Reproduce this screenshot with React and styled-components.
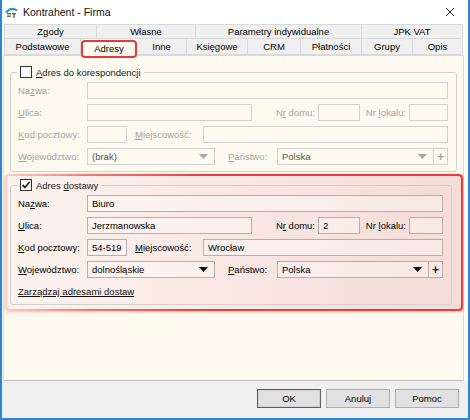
import React from "react";
import styled, { createGlobalStyle } from "styled-components";

const GlobalStyle = createGlobalStyle`
  html, body {
    margin: 0;
    padding: 0;
    background: #ffffff;
  }
  body {
    font-family: "Liberation Sans", Arial, sans-serif;
    font-size: 9.5px;
    color: #000;
  }
  * {
    box-sizing: border-box;
  }
`;

const topTabs = [
  { label: "Zgody", w: 93 },
  { label: "Własne", w: 99 },
  { label: "Parametry indywidualne", w: 166 },
  { label: "JPK VAT", w: 101 },
];

const bottomTabs = [
  { label: "Podstawowe", w: 77 },
  { label: "Adresy", w: 56, active: true },
  { label: "Inne", w: 50 },
  { label: "Księgowe", w: 61 },
  { label: "CRM", w: 53 },
  { label: "Płatności", w: 61 },
  { label: "Grupy", w: 51 },
  { label: "Opis", w: 50 },
];

function AppIcon() {
  return (
    <svg width="13" height="13" viewBox="0 0 13 13">
      <path d="M1 6.5 Q6 0.5 12 4.5" stroke="#2f8fc9" strokeWidth="2" fill="none" />
      <rect x="2" y="7" width="4" height="1.4" fill="#5c6670" />
      <rect x="2" y="9.5" width="4" height="1.4" fill="#5c6670" />
      <rect x="7" y="7" width="4" height="1.4" fill="#5c6670" />
      <rect x="8.3" y="7" width="1.4" height="5" fill="#5c6670" />
    </svg>
  );
}

function CloseIcon() {
  return (
    <svg width="10" height="10" viewBox="0 0 10 10">
      <path d="M1 1 L9 9 M9 1 L1 9" stroke="#2b2b2b" strokeWidth="1" />
    </svg>
  );
}

function Arrow({ disabled }) {
  return (
    <svg width="9" height="5" viewBox="0 0 9 5">
      <path d="M0 0 H9 L4.5 5 Z" fill={disabled ? "#a8a8a8" : "#111"} />
    </svg>
  );
}

function CheckMark() {
  return (
    <svg width="10" height="10" viewBox="0 0 10 10">
      <path d="M1.5 5 L4 7.5 L8.5 2" stroke="#222" strokeWidth="1.8" fill="none" />
    </svg>
  );
}

function AddressGroup({ title, accel, checked, disabled, values, link }) {
  const v = values || {};
  return (
    <Group $disabled={disabled}>
      <Legend>
        <CheckBox>{checked && <CheckMark />}</CheckBox>
        <span>{title}</span>
      </Legend>
      <Rows>
        <Row>
          <Label $w={69} $disabled={disabled}>
            Na<U>z</U>wa:
          </Label>
          <Field $disabled={disabled} $grow>
            {v.nazwa}
          </Field>
        </Row>
        <Row>
          <Label $w={69} $disabled={disabled}>
            <U>U</U>lica:
          </Label>
          <Field $disabled={disabled} $w={165}>
            {v.ulica}
          </Field>
          <Label $w={66} $disabled={disabled} $right>
            N<U>r</U> domu:
          </Label>
          <Field $disabled={disabled} $w={42}>
            {v.nrDomu}
          </Field>
          <Label $w={49} $disabled={disabled} $right>
            Nr <U>l</U>okalu:
          </Label>
          <Field $disabled={disabled} $grow />
        </Row>
        <Row>
          <Label $w={69} $disabled={disabled}>
            <U>K</U>od pocztowy:
          </Label>
          <Field $disabled={disabled} $w={40}>
            {v.kod}
          </Field>
          <Label $w={76} $disabled={disabled} $pad={8}>
            <U>M</U>iejscowość:
          </Label>
          <Field $disabled={disabled} $grow>
            {v.miasto}
          </Field>
        </Row>
        <Row>
          <Label $w={69} $disabled={disabled}>
            <U>W</U>ojewództwo:
          </Label>
          <SelectBox $disabled={disabled} $w={128}>
            <SelectText $disabled={disabled}>{v.woj}</SelectText>
            <Arrow disabled={disabled} />
          </SelectBox>
          <Label $w={62} $disabled={disabled} $pad={13}>
            <U>P</U>aństwo:
          </Label>
          <SelectBox $disabled={disabled} $grow $flush>
            <SelectText $disabled={disabled}>Polska</SelectText>
            <Arrow disabled={disabled} />
            <PlusButton $disabled={disabled}>+</PlusButton>
          </SelectBox>
        </Row>
      </Rows>
      {link && <ManageLink>Zarządzaj adresami dostaw</ManageLink>}
    </Group>
  );
}

export default function App() {
  return (
    <>
      <GlobalStyle />
      <Window>
        <TitleBar>
          <AppIcon />
          <Title>Kontrahent - Firma</Title>
          <CloseButton>
            <CloseIcon />
          </CloseButton>
        </TitleBar>

        <TabStrip>
          <TabRow $h={15}>
            {topTabs.map((t) => (
              <Tab key={t.label} $w={t.w}>
                {t.label}
              </Tab>
            ))}
          </TabRow>
          <TabRow $h={16} $second>
            {bottomTabs.map((t) =>
              t.active ? (
                <ActiveTab key={t.label} $w={t.w}>
                  {t.label}
                </ActiveTab>
              ) : (
                <Tab key={t.label} $w={t.w} $second>
                  {t.label}
                </Tab>
              )
            )}
          </TabRow>
        </TabStrip>

        <Panel>
          <AddressGroup
            title={
              <>
                <U>A</U>dres do korespondencji
              </>
            }
            disabled
            values={{ woj: "(brak)" }}
          />
          <Highlight>
            <HighlightInner>
              <AddressGroup
                title={
                  <>
                    Adres <U>d</U>ostawy
                  </>
                }
                checked
                link
                values={{
                  nazwa: "Biuro",
                  ulica: "Jerzmanowska",
                  nrDomu: "2",
                  kod: "54-519",
                  miasto: "Wrocław",
                  woj: "dolnośląskie",
                }}
              />
            </HighlightInner>
          </Highlight>
        </Panel>

        <Footer>
          <Button $default>OK</Button>
          <Button>Anuluj</Button>
          <Button>Pomoc</Button>
        </Footer>
      </Window>
    </>
  );
}

const Window = styled.div`
  width: 470px;
  height: 420px;
  border: 2px solid #2a86d6;
  border-top: none;
  background: #ffffff;
  display: flex;
  flex-direction: column;
`;

const TitleBar = styled.div`
  height: 23px;
  display: flex;
  align-items: center;
  padding: 1px 0 0 3px;
  gap: 5px;
`;

const Title = styled.div`
  font-size: 10.5px;
  color: #111;
  flex: 1;
`;

const CloseButton = styled.div`
  width: 30px;
  display: flex;
  justify-content: center;
  padding-right: 6px;
`;

const TabStrip = styled.div`
  margin-top: 1px;
  padding-left: 2px;
`;

const TabRow = styled.div`
  display: flex;
  height: ${(p) => p.$h}px;
  align-items: flex-start;
`;

const Tab = styled.div`
  width: ${(p) => p.$w}px;
  height: 100%;
  background: #f0f0f0;
  border: 1px solid #d9d9d9;
  border-left-width: 0;
  border-top-width: ${(p) => (p.$second ? 0 : 1)}px;
  display: flex;
  align-items: center;
  justify-content: center;
  color: #000;

  &:first-child {
    border-left-width: 1px;
  }
`;

const ActiveTab = styled.div`
  width: ${(p) => p.$w}px;
  height: 18px;
  margin-top: 1px;
  position: relative;
  z-index: 1;
  background: #fffaf0;
  border: 2px solid #e23a3a;
  border-radius: 4px;
  display: flex;
  align-items: center;
  justify-content: center;
  padding-bottom: 2px;
`;

const Panel = styled.div`
  width: 461px;
  height: 326px;
  margin-left: 1px;
  background: #fffaf0;
  border: 1px solid #d9d9d9;
  border-bottom-color: #bcbcbc;
  padding: 10px 6px 0 6px;
`;

const Group = styled.fieldset`
  margin: 0;
  min-width: 0;
  border: 1px solid #d2d0cc;
  border-radius: 3px;
  padding: 4px 8px 6px 7px;
`;

const Legend = styled.legend`
  padding: 0 3px;
  margin-left: -1px;
  display: flex;
  align-items: center;
  gap: 4px;
  height: 12px;
  color: #1a1a1a;
`;

const CheckBox = styled.span`
  width: 12px;
  height: 12px;
  border: 1px solid #333;
  background: #fff;
  display: flex;
  align-items: center;
  justify-content: center;
`;

const Rows = styled.div`
  display: flex;
  flex-direction: column;
  gap: 5px;
`;

const Row = styled.div`
  display: flex;
  align-items: center;
  height: 17px;
`;

const Label = styled.div`
  width: ${(p) => p.$w}px;
  flex-shrink: 0;
  text-align: ${(p) => (p.$right ? "right" : "left")};
  padding-left: ${(p) => p.$pad || 0}px;
  padding-right: ${(p) => (p.$right ? 3 : 0)}px;
  color: ${(p) => (p.$disabled ? "#a3a3a3" : "#000")};
  white-space: nowrap;
`;

const U = styled.span`
  text-decoration: underline;
`;

const Field = styled.div`
  ${(p) => (p.$grow ? "flex: 1;" : `width: ${p.$w}px; flex-shrink: 0;`)}
  height: 17px;
  border: 1px solid ${(p) => (p.$disabled ? "#d3d1cd" : "#b9adab")};
  background: ${(p) => (p.$disabled ? "transparent" : "rgba(255, 255, 255, 0.35)")};
  display: flex;
  align-items: center;
  padding-left: 4px;
  color: #000;
`;

const SelectBox = styled(Field)`
  padding-right: ${(p) => (p.$flush ? 0 : 6)}px;
  gap: 6px;
`;

const SelectText = styled.span`
  flex: 1;
  color: ${(p) => (p.$disabled ? "#555" : "#000")};
`;

const PlusButton = styled.div`
  width: 14px;
  height: 100%;
  border-left: 1px solid ${(p) => (p.$disabled ? "#d3d1cd" : "#b9adab")};
  display: flex;
  align-items: center;
  justify-content: center;
  font-size: 12px;
  font-weight: bold;
  color: ${(p) => (p.$disabled ? "#a3a3a3" : "#111")};
`;

const ManageLink = styled.div`
  margin-top: 8px;
  line-height: 12px;
  text-decoration: underline;
  color: #111;
`;

const Highlight = styled.div`
  margin: 2px -6px 0 -5px;
  padding: 2px;
  border-radius: 4px;
  background: linear-gradient(to right, #f9cfc6 0%, #f27a72 18%, #ee3b3b 45%, #ee3b3b 100%);
  box-shadow: 0 1px 3px rgba(240, 80, 80, 0.35);
`;

const HighlightInner = styled.div`
  border-radius: 3px;
  background: linear-gradient(to right, #fdf3ee 0%, #f8e6e2 55%, #f4dcd8 100%);
  padding: 3px 9px 4px 3px;
`;

const Footer = styled.div`
  flex: 1;
  background: #f0f0f0;
  display: flex;
  justify-content: flex-end;
  align-items: flex-start;
  gap: 5px;
  padding: 8px 9px 0 0;
`;

const Button = styled.div`
  width: 64px;
  height: 19px;
  background: #e1e1e1;
  border: 1px solid ${(p) => (p.$default ? "#5f5f5f" : "#adadad")};
  box-shadow: ${(p) => (p.$default ? "inset 0 0 0 1px #cfcfcf" : "none")};
  display: flex;
  align-items: center;
  justify-content: center;
  color: #000;
`;
